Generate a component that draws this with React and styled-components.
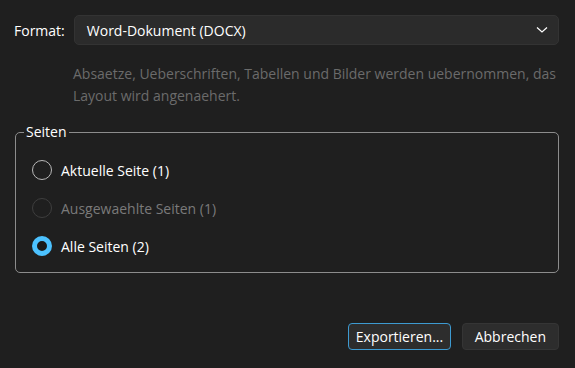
import React, { useState } from 'react';
import styled, { createGlobalStyle } from 'styled-components';

const GlobalStyle = createGlobalStyle`
    html, body {
        margin: 0;
        padding: 0;
        background: #1f1f1f;
    }
    body {
        font-family: "Open Sans", "Noto Sans", sans-serif;
        color: #ffffff;
    }
`;

const Dialog = styled.div`
    width: 575px;
    height: 368px;
    box-sizing: border-box;
    padding: 15px 16px 0 14px;
    background: #1f1f1f;
    font-size: 14px;
`;

const FormatRow = styled.div`
    display: flex;
    align-items: center;
    gap: 9px;
`;

const Label = styled.span`
    font-size: 14px;
    color: #ffffff;
`;

const Combo = styled.div`
    flex: 1;
    height: 30px;
    box-sizing: border-box;
    display: flex;
    align-items: center;
    justify-content: space-between;
    padding: 0 10px 0 12px;
    background: #2b2b2b;
    border: 1px solid #333333;
    border-radius: 5px;
`;

const Description = styled.p`
    margin: 18px -4px 0 59px;
    font-size: 14px;
    line-height: 22px;
    color: #6b6b6b;
`;

const Group = styled.fieldset`
    margin: 16px 0 0 1px;
    padding: 10px 0 7px 16px;
    border: 1px solid #8c8c8c;
    border-radius: 5px;
`;

const Legend = styled.legend`
    padding: 0 2px;
    margin-left: -8px;
    font-size: 14px;
    line-height: 18px;
`;

const Option = styled.label`
    display: flex;
    align-items: center;
    gap: 9px;
    height: 38px;
    font-size: 14px;
    color: ${(p) => (p.disabled ? '#7a7a7a' : '#ffffff')};
`;

const Radio = styled.span`
    width: 20px;
    height: 20px;
    box-sizing: border-box;
    border-radius: 50%;
    flex-shrink: 0;
    border: ${(p) => (p.checked ? '5.5px solid #4cc2ff' : p.disabled ? '1px solid #3e3e3e' : '1px solid #b8b8b8')};
    background: ${(p) => (p.checked ? '#1a1a1a' : 'transparent')};
`;

const Actions = styled.div`
    display: flex;
    justify-content: flex-end;
    gap: 11px;
    margin-top: 50px;
`;

const Button = styled.button`
    height: 27px;
    padding: 0 ${(p) => (p.primary ? '6.5px' : '12px')};
    font-family: inherit;
    font-size: 14px;
    color: #ffffff;
    background: #2d2d2d;
    border: 1px solid ${(p) => (p.primary ? '#3d9ad1' : '#353535')};
    border-radius: 4px;
`;

const Chevron = () => (
    <svg width="12" height="8" viewBox="0 0 12 8" fill="none">
        <path d="M1 1.5 L6 6 L11 1.5" stroke="#ffffff" strokeWidth="1.2" />
    </svg>
);

const options = [
    { label: 'Aktuelle Seite (1)' },
    { label: 'Ausgewaehlte Seiten (1)', disabled: true },
    { label: 'Alle Seiten (2)' },
];

export default function App() {
    const [selected, setSelected] = useState(2);

    return (
        <Dialog>
            <GlobalStyle />
            <FormatRow>
                <Label>Format:</Label>
                <Combo>
                    <span>Word-Dokument (DOCX)</span>
                    <Chevron />
                </Combo>
            </FormatRow>
            <Description>
                Absaetze, Ueberschriften, Tabellen und Bilder werden uebernommen, das Layout wird angenaehert.
            </Description>
            <Group>
                <Legend>Seiten</Legend>
                {options.map((o, i) => (
                    <Option key={o.label} disabled={o.disabled} onClick={() => !o.disabled && setSelected(i)}>
                        <Radio checked={selected === i} disabled={o.disabled} />
                        {o.label}
                    </Option>
                ))}
            </Group>
            <Actions>
                <Button primary>Exportieren...</Button>
                <Button>Abbrechen</Button>
            </Actions>
        </Dialog>
    );
}
